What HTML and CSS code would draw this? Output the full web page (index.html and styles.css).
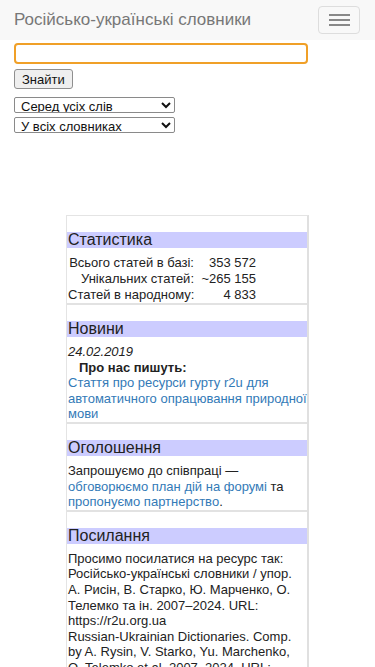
FILE: index.html
```html
<!DOCTYPE html>
<html lang="uk">
<head>
    <meta charset="UTF-8">
    <meta name="viewport" content="width=device-width, initial-scale=1.0">
    <title>Російсько-українські словники</title>
    <link rel="stylesheet" href="styles.css">
</head>
<body>
    <nav class="navbar">
        <a class="brand" href="#">Російсько-українські словники</a>
        <button class="toggle" type="button" aria-label="Меню">
            <span class="bar"></span>
            <span class="bar"></span>
            <span class="bar"></span>
        </button>
    </nav>

    <form class="search">
        <input class="query" type="text">
        <div><button class="find" type="button">Знайти</button></div>
        <div class="selects">
            <select class="pick">
                <option>Серед усіх слів</option>
            </select>
            <select class="pick">
                <option>У всіх словниках</option>
            </select>
        </div>
    </form>

    <div class="panel">
        <section class="block">
            <h2>Статистика</h2>
            <div class="stats">
                <span>Всього статей в базі:</span><span>353 572</span>
                <span>Унікальних статей:</span><span>~265 155</span>
                <span>Статей в народному:</span><span>4 833</span>
            </div>
        </section>

        <section class="block">
            <h2>Новини</h2>
            <p class="date">24.02.2019</p>
            <p class="lead">Про нас пишуть:</p>
            <p><a href="#">Стаття про ресурси гурту r2u для автоматичного опрацювання природної мови</a></p>
        </section>

        <section class="block">
            <h2>Оголошення</h2>
            <p>Запрошуємо до співпраці — <a href="#">обговорюємо план дій на форумі</a> та <a href="#">пропонуємо партнерство</a>.</p>
        </section>

        <section class="block">
            <h2>Посилання</h2>
            <p>Просимо посилатися на ресурс так: Російсько-українські словники / упор. А. Рисін, В. Старко, Ю. Марченко, О. Телемко та ін. 2007–2024. URL: https://r2u.org.ua<br>
            Russian-Ukrainian Dictionaries. Comp. by A. Rysin, V. Starko, Yu. Marchenko, O. Telemko et al. 2007–2024. URL: https://r2u.org.ua</p>
        </section>
    </div>
</body>
</html>
```

FILE: styles.css
```css
* {
    box-sizing: border-box;
}

body {
    margin: 0;
    font-family: "Liberation Sans", Arial, sans-serif;
    font-size: 13px;
    line-height: 15.6px;
    color: #222;
    background: #fff;
}

a {
    color: #337ab7;
    text-decoration: none;
}

.navbar {
    height: 40px;
    background: #f8f8f8;
    display: flex;
    align-items: flex-start;
    justify-content: space-between;
    padding: 0 15px 0 14px;
}

.brand {
    color: #777;
    font-size: 17px;
    line-height: 20px;
    margin-top: 10px;
}

.toggle {
    width: 42px;
    height: 28px;
    margin-top: 6px;
    background: transparent;
    border: 1px solid #ddd;
    border-radius: 4px;
    display: flex;
    flex-direction: column;
    align-items: center;
    justify-content: center;
    gap: 3px;
    padding: 0;
}

.bar {
    display: block;
    width: 21px;
    height: 2px;
    background: #888;
}

.search {
    padding: 3px 14px 0;
}

.query {
    display: block;
    width: 294px;
    height: 21px;
    margin: 0;
    border: 2px solid #f0a028;
    border-radius: 4px;
    outline: none;
}

.find {
    margin-top: 5px;
    height: 20px;
    padding: 0 7px;
    font-family: inherit;
    font-size: 13px;
    color: #111;
    background: #efefef;
    border: 1px solid #8f8f8f;
    border-radius: 3px;
}

.selects {
    margin-top: 8px;
    display: flex;
    flex-direction: column;
    gap: 4px;
}

.pick {
    width: 161px;
    height: 16px;
    padding: 0 0 0 2px;
    font-family: inherit;
    font-size: 13px;
    line-height: 14px;
    color: #111;
    background: #fff;
    border: 1px solid #8a8a8a;
    border-radius: 2px;
}

.panel {
    width: 243px;
    margin: 82px auto 0;
    border-left: 1px solid #e4e4e4;
    border-right: 2px solid #e0e0e0;
    border-top: 1px solid #e4e4e4;
}

.block {
    padding-top: 16px;
    border-bottom: 2px solid #e2e2e2;
}

.block h2 {
    margin: 0 0 7px;
    padding-left: 1px;
    font-size: 16px;
    font-weight: normal;
    line-height: 16px;
    height: 16px;
    background: #ccccff;
    color: #222;
}

.block p {
    margin: 0;
    padding-left: 1px;
}

.date {
    font-style: italic;
}

.lead {
    font-weight: bold;
    text-indent: 11px;
}

.stats {
    display: grid;
    grid-template-columns: 126px 62px;
    grid-auto-rows: 16px;
    line-height: 16px;
    padding-left: 1px;
    text-align: right;
    white-space: nowrap;
}
```
